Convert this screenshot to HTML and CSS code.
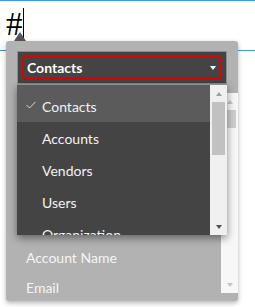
FILE: index.html
```html
<!DOCTYPE html>
<html>
<head>
<meta charset="utf-8">
<link rel="stylesheet" href="styles.css">
</head>
<body>
<div class="rule top"></div>
<div class="editor"><span class="hash">#</span><span class="caret"></span></div>
<div class="rule"></div>

<div class="panel">
  <div class="panel-arrow"></div>
  <div class="select">
    <div class="select-ring">
      <span class="select-label">Contacts</span>
      <span class="tri down white"></span>
    </div>
  </div>
  <div class="plist">
    <ul class="fields">
      <li>Account Name</li>
      <li>Email</li>
    </ul>
    <div class="sbar light">
      <div class="sbtn"><span class="tri up pale"></span></div>
      <div class="track"><div class="thumb pthumb"></div></div>
      <div class="sbtn"><span class="tri down pale"></span></div>
    </div>
  </div>

  <div class="dropdown">
    <ul class="options">
      <li class="opt selected"><svg class="check" width="10" height="8" viewBox="0 0 10 8"><polyline points="0.5,4 3.5,7 9.5,0.8" fill="none" stroke="#d8d8d8" stroke-width="1"/></svg>Contacts</li>
      <li class="opt">Accounts</li>
      <li class="opt">Vendors</li>
      <li class="opt">Users</li>
      <li class="opt">Organization</li>
    </ul>
    <div class="sbar">
      <div class="sbtn"><span class="tri up grey"></span></div>
      <div class="track"><div class="thumb dthumb"></div></div>
      <div class="sbtn"><span class="tri down dark"></span></div>
    </div>
  </div>
</div>
</body>
</html>
```

FILE: styles.css
```css
html, body {
  margin: 0;
  padding: 0;
  background: #fff;
}
body {
  width: 255px;
  height: 307px;
  overflow: hidden;
  position: relative;
  font-family: Lato, "Open Sans", sans-serif;
}
.rule {
  height: 1px;
  background: #3d9ae8;
}
.editor {
  height: 49px;
  display: flex;
  align-items: flex-start;
  padding-left: 6px;
  box-sizing: border-box;
}
.hash {
  font-family: "Liberation Serif", serif;
  font-size: 33px;
  line-height: 33px;
  margin-top: 7px;
  color: #000;
}
.caret {
  width: 1px;
  height: 32px;
  background: #000;
  margin-top: 7px;
  margin-left: 0px;
}

.panel {
  position: absolute;
  left: 6px;
  top: 41px;
  width: 232px;
  height: 260px;
  background: #b2b2b2;
  border-radius: 3px;
  box-shadow: 0 2px 5px rgba(0,0,0,0.3);
  box-sizing: border-box;
  padding-top: 10px;
  display: flex;
  flex-direction: column;
}
.panel-arrow {
  position: absolute;
  left: 8px;
  top: -9px;
  width: 0;
  height: 0;
  border-left: 6px solid transparent;
  border-right: 6px solid transparent;
  border-bottom: 9px solid #555;
}
.select {
  margin-left: 11px;
  width: 210px;
  height: 33px;
  box-sizing: border-box;
  border: 1px solid #8e8e8e;
  background: #444;
  padding: 3px 4px;
}
.select-ring {
  height: 25px;
  box-sizing: border-box;
  border: 2px solid #e00000;
  border-radius: 5px;
  display: flex;
  align-items: center;
  justify-content: space-between;
  padding: 0 4px 0 3px;
}
.select-label {
  color: #fff;
  font-weight: bold;
  font-size: 14px;
}
.tri {
  display: block;
  width: 0;
  height: 0;
  border-left: 3.5px solid transparent;
  border-right: 3.5px solid transparent;
}
.tri.down { border-top: 4px solid; }
.tri.up { border-bottom: 4px solid; }
.tri.white { color: #fff; }
.tri.pale { color: #c4c4c4; }
.tri.grey { color: #a0a0a0; }
.tri.dark { color: #505050; }

.plist {
  margin-top: 9px;
  height: 200px;
  display: flex;
}
.fields {
  flex: 1;
  list-style: none;
  margin: 0;
  padding: 150px 0 0 20px;
  overflow: hidden;
}
.fields li {
  height: 30px;
  line-height: 30px;
  color: #f5f5f5;
  font-size: 14px;
}
.sbar {
  width: 17px;
  display: flex;
  flex-direction: column;
  background: #f0f0f0;
}
.sbar.light { background: #f7f7f7; }
.sbtn {
  height: 17px;
  display: flex;
  align-items: center;
  justify-content: center;
}
.track {
  flex: 1;
  padding: 0 2px;
}
.thumb {
  background: #c1c1c1;
}
.pthumb { height: 18px; background: #cdcdcd; }
.dthumb { height: 53px; }

.dropdown {
  position: absolute;
  left: 11px;
  top: 43px;
  width: 210px;
  height: 151px;
  box-sizing: border-box;
  border-top: 1px solid #8e8e8e;
  background: #444;
  display: flex;
  box-shadow: 0 3px 8px rgba(0,0,0,0.45);
}
.options {
  flex: 1;
  list-style: none;
  margin: 0;
  padding: 0;
  overflow: hidden;
}
.opt {
  height: 32px;
  display: flex;
  align-items: center;
  padding-left: 25px;
  color: #f2f2f2;
  font-size: 14px;
  white-space: nowrap;
}
.opt.selected {
  height: 37px;
  padding-top: 5px;
  box-sizing: border-box;
  padding-left: 9px;
  background: #5b5b5b;
}
.check {
  margin-right: 6px;
  margin-top: -2px;
}
```
